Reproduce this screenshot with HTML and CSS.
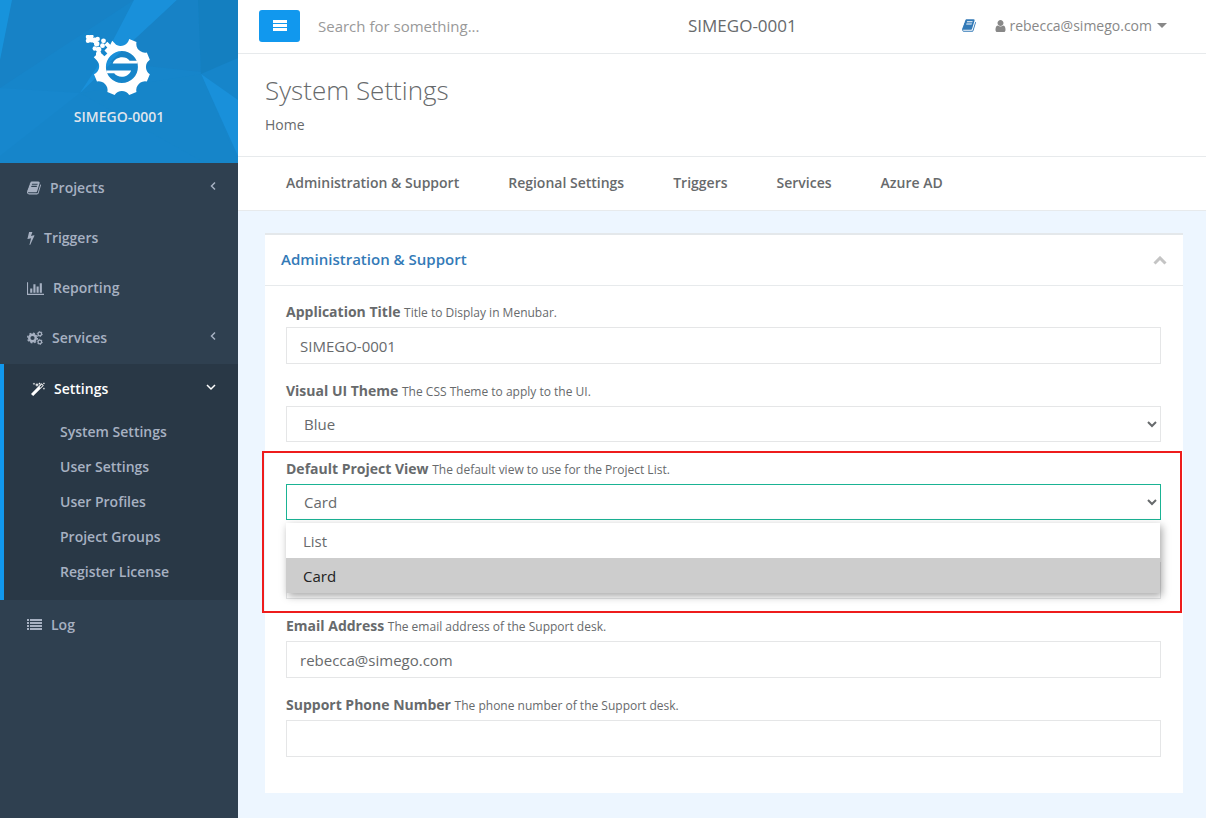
FILE: index.html
```html
<!DOCTYPE html>
<html lang="en">
<head>
<meta charset="utf-8">
<title>System Settings</title>
<link rel="stylesheet" href="styles.css">
</head>
<body>
<svg class="sprite" aria-hidden="true">
  <symbol id="book" viewBox="60 110 1670 1570"><path d="M1703 478q40 57 18 129l-275 906q-19 64-76.5 107.5t-122.5 43.5h-923q-77 0-148.5-53.5t-99.5-131.5q-24-67-2-127 0-4 3-27t4-37q1-8-3-21.5t-3-19.5q2-11 8-21t16.5-23.5 16.5-23.5q23-38 45-91.5t30-91.5q3-10 .5-30t-.5-28q3-11 17-28t17-23q21-36 42-92t25-90q1-9-2.5-32t.5-28q4-13 22-30.5t22-22.5q19-26 42.5-84.5t27.5-96.5q1-8-3-25.5t-2-26.5q2-8 9-18t18-23 17-21q8-12 16.5-30.5t15-35 16-36 19.5-32 26.5-23.5 36-11.5 47.5 5.5l-1 3q38-9 51-9h761q74 0 114 56t18 130l-274 906q-36 119-71.5 153.5t-128.5 34.5h-869q-27 0-38 15-11 16-1 43 24 70 144 70h923q29 0 56-15.5t35-41.5l300-987q7-22 5-57 38 15 59 43zm-1064 2q-4 13 2 22.5t20 9.5h608q13 0 25.5-9.5t16.5-22.5l21-64q4-13-2-22.5t-20-9.5h-608q-13 0-25.5 9.5t-16.5 22.5zm-83 256q-4 13 2 22.5t20 9.5h608q13 0 25.5-9.5t16.5-22.5l21-64q4-13-2-22.5t-20-9.5h-608q-13 0-25.5 9.5t-16.5 22.5z"/></symbol>
</svg>
<div class="layout">
  <aside class="sidebar">
    <div class="brand">
      <svg class="brand-bg" viewBox="0 0 238 163" preserveAspectRatio="none" aria-hidden="true">
        <rect width="238" height="163" fill="#1685ca"/>
        <path d="M0 0H134L0 88z" fill="#1782c6"/>
        <path d="M0 0H12L0 60z" fill="#1793dc"/>
        <path d="M134 0H177L80 93L108 50z" fill="#1990da"/>
        <path d="M177 0H198L201 72L110 62z" fill="#1782c6"/>
        <path d="M198 0H238V58L201 74z" fill="#147fc0"/>
        <path d="M201 74L238 100V156z" fill="#1990da"/>
        <path d="M80 93L201 74L238 163H205z" fill="#1685c9"/>
        <path d="M0 88L80 93L0 156z" fill="#1787cd"/>
      </svg>
      <svg class="logo" viewBox="-38 -33 70 66" aria-hidden="true">
        <path fill="#fff" fill-rule="evenodd" d="M28.8-7.500A9 9 0 0 0 28.8 7.500L25.700 15A9 9 0 0 0 15 25.700L7.500 28.800A9 9 0 0 0-7.500 28.800L-15 25.700A9 9 0 0 0-25.700 15L-28.800 7.500A9 9 0 0 0-26-7L-29-10L-26-13L-24-11L-21-14L-18-11L-15-14L-18-17L-15-20L-18-23L-15-26L-12-23L-10-27L-6-23A9 9 0 0 0 7.500-28.800L15-25.700A9 9 0 0 0 25.700-15zM16.5 0A16.5 16.5 0 1 0-16.5 0A16.5 16.5 0 1 0 16.5 0z"/>
        <path fill="#fff" d="M-9.500-3.500C-7-11 4-12 8-6.500H16V-3.500zM9.500 3.500C7 11-4 12-8 6.500H-16V3.500z"/>
        <g fill="#fff">
          <circle cx="-35" cy="-31" r="2.300"/><circle cx="-31.500" cy="-31.500" r="2.300"/><circle cx="-35" cy="-27" r="2.300"/><circle cx="-31.500" cy="-28" r="2.800"/><circle cx="-28" cy="-27.500" r="3"/><circle cx="-25" cy="-29" r="2.300"/><circle cx="-26" cy="-24" r="2.800"/>
          <circle cx="-28" cy="-19" r="2.300"/><circle cx="-24" cy="-18" r="2.800"/><circle cx="-24" cy="-13.500" r="2.800"/><circle cx="-20" cy="-22" r="2.500"/><circle cx="-19" cy="-27" r="2.500"/>
        </g>
      </svg>
      <strong class="brand-name">SIMEGO-0001</strong>
    </div>
    <nav>
      <ul class="menu">
        <li><a class="menu-link" href="#"><svg class="w14" aria-hidden="true"><use href="#book"/></svg>Projects<svg class="arrow" viewBox="0 0 10 10"><path d="M9 1.500L5.500 5L9 8.500"/></svg></a></li>
        <li><a class="menu-link" href="#"><svg class="w8" viewBox="440 0 920 1792"><path d="M1333 566q18 20 7 44l-540 1157q-13 25-42 25-4 0-14-2-17-5-25.500-19t-4.500-30l197-808-406 101q-4 1-12 1-18 0-31-11-18-15-13-39l201-825q4-14 16-23t28-9h328q19 0 32 12.500t13 29.500q0 8-5 18l-171 463 396-98q8-2 12-2 19 0 34 15z"/></svg>Triggers</a></li>
        <li><a class="menu-link" href="#"><svg class="w17" viewBox="0 0 16 13"><path d="M0 1h1v11h15v1H0zM3 7h2v4H3zM6 3h2v8H6zM9 5h2v6H9zM12 2h2v9h-2z"/></svg>Reporting</a></li>
        <li><a class="menu-link" href="#"><svg class="w16" viewBox="0 0 16 14"><g fill="none" stroke="currentColor"><circle cx="5.500" cy="7" r="3.300" stroke-width="2.400"/><circle cx="5.500" cy="7" r="4.900" stroke-width="1.300" stroke-dasharray="1.900 1.950"/><circle cx="12.800" cy="3" r="1.800" stroke-width="1.300"/><circle cx="12.800" cy="3" r="2.600" stroke-width=".8" stroke-dasharray="1.200 1.500"/><circle cx="12.800" cy="11" r="1.800" stroke-width="1.300"/><circle cx="12.800" cy="11" r="2.600" stroke-width=".8" stroke-dasharray="1.200 1.500"/></g></svg>Services<svg class="arrow" viewBox="0 0 10 10"><path d="M9 1.500L5.500 5L9 8.500"/></svg></a></li>
        <li class="active"><a class="menu-link" href="#"><svg class="w14" viewBox="0 0 14 14"><path fill-rule="evenodd" d="M0 12L10.500 1.200l2.300 2.300L2.200 14zM8.500 5l.8.8 2.300-2.400-.8-.8zM3 .4l.4 1 1 .4-1 .4-.4 1-.4-1-1-.4 1-.4zM6 .8l.6 1.500 1.500.6-1.500.6L6 5l-.6-1.500-1.500-.6 1.500-.6zM8.500.2l.4 1 1 .4-1 .4-.4 1-.4-1-1-.4 1-.4zM13 .2l.3.9.7.3-.7.3-.3.9-.4-.9-.9-.3.900-.3zM13 5.200l.3 1 .7.4-.7.4-.3 1-.4-1-.9-.4.900-.4z"/></svg>Settings<svg class="arrow" viewBox="0 0 10 10"><path d="M1 3l4 4 4-4"/></svg></a>
          <ul class="submenu">
            <li><a href="#">System Settings</a></li>
            <li><a href="#">User Settings</a></li>
            <li><a href="#">User Profiles</a></li>
            <li><a href="#">Project Groups</a></li>
            <li><a href="#">Register License</a></li>
          </ul>
        </li>
        <li><a class="menu-link" href="#"><svg class="w15" viewBox="0 0 15 14"><path d="M0 1h2v2H0zM3 1h12v2H3zM0 4h2v2H0zM3 4h12v2H3zM0 7h2v2H0zM3 7h12v2H3zM0 10h2v2H0zM3 10h12v2H3z"/></svg>Log</a></li>
      </ul>
    </nav>
  </aside>

  <div class="page">
    <header class="topbar">
      <button class="toggle" type="button" aria-label="Toggle menu"><svg viewBox="0 0 14 12" aria-hidden="true"><path d="M0 0h14v3H0zM0 4h14v3H0zM0 8h14v3H0z"/></svg></button>
      <input class="search" type="search" placeholder="Search for something..." aria-label="Search">
      <span class="app-title">SIMEGO-0001</span>
      <div class="account">
        <a class="docs" href="#" aria-label="Documentation"><svg class="w14" aria-hidden="true"><use href="#book"/></svg></a>
        <a class="user" href="#"><svg viewBox="256 128 1280 1536" aria-hidden="true"><path d="M1536 1399q0 109-62.500 187t-150.500 78h-854q-88 0-150.500-78t-62.500-187q0-85 8.500-160.500t31.500-152 58.500-131 94-89 134.500-34.500q131 128 313 128t313-128q76 0 134.500 34.500t94 89 58.500 131 31.500 152 8.500 160.500zm-256-887q0 159-112.500 271.500t-271.500 112.500-271.500-112.500-112.500-271.500 112.500-271.500 271.500-112.500 271.500 112.500 112.500 271.500z"/></svg>rebecca@simego.com<span class="caret"></span></a>
      </div>
    </header>

    <div class="heading">
      <h1>System Settings</h1>
      <a href="#">Home</a>
    </div>

    <nav class="tabs">
      <a href="#">Administration &amp; Support</a>
      <a href="#">Regional Settings</a>
      <a href="#">Triggers</a>
      <a href="#">Services</a>
      <a href="#">Azure AD</a>
    </nav>

    <main class="content">
      <section class="panel">
        <div class="panel-head">
          <h2>Administration &amp; Support</h2>
          <button class="collapse" type="button" aria-label="Collapse"><svg viewBox="0 0 14 9" aria-hidden="true"><path d="M1.500 7.500L7 2l5.500 5.500"/></svg></button>
        </div>
        <form class="panel-body">
          <div class="field">
            <label for="title">Application Title <small>Title to Display in Menubar.</small></label>
            <input id="title" class="control" type="text" value="SIMEGO-0001">
          </div>
          <div class="field">
            <label for="theme">Visual UI Theme <small>The CSS Theme to apply to the UI.</small></label>
            <select id="theme" class="control"><option>Blue</option></select>
          </div>
          <div class="field marked">
            <label for="view">Default Project View <small>The default view to use for the Project List.</small></label>
            <select id="view" class="control open"><option>List</option><option selected>Card</option></select>
            <ul class="options" role="listbox" aria-label="Default Project View">
              <li role="option">List</li>
              <li role="option" aria-selected="true">Card</li>
            </ul>
          </div>
          <div class="field">
            <span class="label-space"></span>
            <input class="control" type="text" aria-label="Support desk">
          </div>
          <div class="field">
            <label for="email">Email Address <small>The email address of the Support desk.</small></label>
            <input id="email" class="control" type="text" value="rebecca@simego.com">
          </div>
          <div class="field">
            <label for="phone">Support Phone Number <small>The phone number of the Support desk.</small></label>
            <input id="phone" class="control" type="text">
          </div>
        </form>
      </section>
    </main>
  </div>
</div>
</body>
</html>
```
FILE: styles.css
```css
* { box-sizing: border-box; }
body {
  margin: 0;
  font-family: "Open Sans", "Noto Sans", sans-serif;
  font-size: 14px;
  line-height: 20px;
  color: #676a6c;
  background: #edf6ff;
}
a { color: inherit; text-decoration: none; }
ul { list-style: none; margin: 0; padding: 0; }
button { border: 0; padding: 0; cursor: pointer; }
svg { fill: currentColor; flex: none; }
.sprite { position: absolute; width: 0; height: 0; }
.layout { display: flex; min-height: 100vh; }

.sidebar { flex: 0 0 238px; background: #2f4050; color: #a7b1c2; font-weight: 600; }
.brand {
  position: relative;
  display: flex;
  flex-direction: column;
  align-items: center;
  gap: 8px;
  height: 163px;
  padding-top: 35px;
  overflow: hidden;
}
.brand-bg { position: absolute; inset: 0; width: 100%; height: 100%; }
.logo { position: relative; width: 68px; height: 64px; }
.brand-name { position: relative; color: #dfe4ed; font-weight: 600; }
.menu-link { display: flex; align-items: center; gap: 9px; height: 50px; padding: 0 22px 0 27px; }
.menu-link svg { height: 14px; }
.w8 { width: 8px; }
.w14 { width: 14px; height: 13px; }
.w15 { width: 15px; }
.w16 { width: 16px; }
.w17 { width: 17px; }
.menu-link .arrow {
  width: 10px;
  height: 10px;
  margin: 0 0 4px auto;
  fill: none;
  stroke: currentColor;
  stroke-width: 1.5;
}
.active { margin-top: 1px; background: #293846; border-left: 4px solid #1198ee; padding-bottom: 10px; }
.active .menu-link { color: #fff; }
.submenu { padding-top: 1px; }
.submenu a { display: block; height: 35px; padding: 7px 0 0 56px; }

.page { flex: 1; min-width: 0; }
.topbar {
  display: flex;
  align-items: center;
  height: 54px;
  padding: 0 39px 2px 21px;
  background: #fff;
  border-bottom: 1px solid #e7eaec;
}
.toggle {
  display: grid;
  place-items: center;
  width: 41px;
  height: 32px;
  border-radius: 3px;
  background: #1198ee;
  color: #fff;
}
.toggle svg { width: 14px; height: 12px; }
.search {
  width: 370px;
  margin-left: 18px;
  padding: 0;
  border: 0;
  outline: 0;
  font: inherit;
  font-size: 15px;
  color: inherit;
  background: none;
}
.app-title { font-size: 17px; }
.search::placeholder { color: #999; }
.account { display: flex; align-items: center; gap: 19px; margin-left: auto; color: #888; }
.docs { display: flex; color: #337ab7; }
.user { display: flex; align-items: center; }
.user svg { width: 11px; height: 12px; margin-right: 3px; }
.caret { margin-left: 5px; border: 5px solid transparent; border-top-color: currentColor; border-bottom: 0; }

.heading { height: 103px; padding: 19px 27px; background: #fff; border-bottom: 1px solid #e7eaec; }
.heading h1 { margin: 0 0 8px; font-size: 26px; line-height: 34px; font-weight: 300; }
.heading a { display: block; }
.tabs {
  display: flex;
  gap: 49px;
  height: 54px;
  padding: 16px 48px;
  background: #fff;
  border-bottom: 1px solid #e7eaec;
  font-weight: 600;
}

.content { padding: 22px 23px 25px 27px; }
.panel { background: #fff; border-top: 2px solid #e4e8eb; }
.panel-head {
  display: flex;
  justify-content: space-between;
  height: 51px;
  padding: 14px 16px;
  border-bottom: 1px solid #e7eaec;
}
.panel-head h2 { margin: 0; font-size: 15px; font-weight: 600; color: #337ab7; }
.collapse { display: flex; align-items: center; background: none; color: #c4c4c4; }
.collapse svg { width: 14px; height: 9px; fill: none; stroke: currentColor; stroke-width: 3; }
.panel-body { padding: 16px 22px 19px 21px; }
.field { position: relative; display: flex; flex-direction: column; gap: 5px; margin-bottom: 17px; }
.field label { font-weight: 700; }
.field small { font-size: 12px; line-height: 12px; font-weight: 400; }
.label-space { height: 20px; }
.control {
  width: 100%;
  height: 37px;
  padding: 6px 13px;
  border: 1px solid #e5e6e7;
  border-radius: 0;
  outline: 0;
  background: #fff;
  color: inherit;
  font: inherit;
  font-size: 15px;
}
select.control { height: 36px; }
.control.open { border-color: #1ab394; }
.options {
  position: absolute;
  z-index: 1;
  top: 100%;
  left: 0;
  right: 1px;
  margin-top: 3px;
  background: #fff;
  box-shadow: 2px 3px 8px rgba(0, 0, 0, .35);
  font-size: 15px;
}
.options li { height: 35px; padding: 8px 17px; }
.options [aria-selected] { background: #cdcdcd; color: #222; }
.marked::after {
  content: "";
  position: absolute;
  inset: -8px -21px -93px -24px;
  border: 2px solid #ee1c1c;
  pointer-events: none;
}
```
